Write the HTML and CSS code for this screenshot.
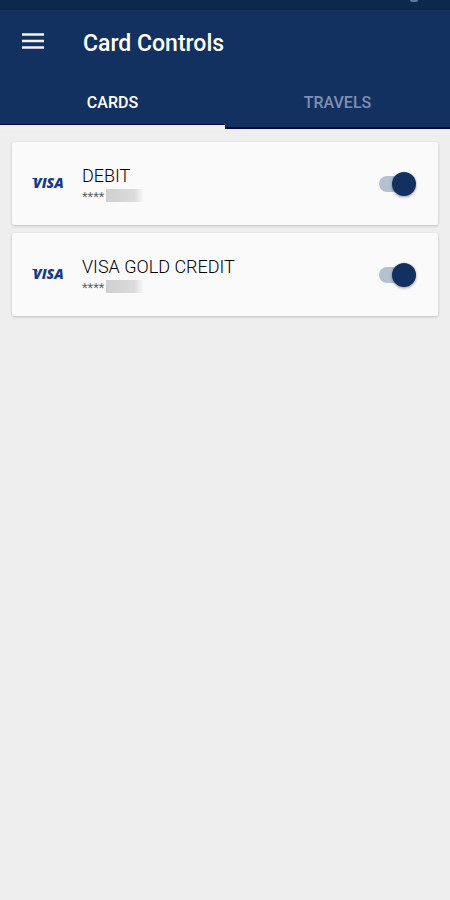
FILE: index.html
```html
<!DOCTYPE html>
<html lang="en">
<head>
<meta charset="utf-8">
<meta name="viewport" content="width=device-width, initial-scale=1">
<title>Card Controls</title>
<link rel="stylesheet" href="styles.css">
</head>
<body>
<header class="header">
  <div class="status"><span class="status-icon"></span></div>
  <div class="toolbar">
    <button class="menu" type="button" aria-label="Menu">
      <svg width="22" height="16" viewBox="0 0 22 16"><path d="M0 1.5h22M0 8h22M0 14.5h22" stroke="currentColor" stroke-width="2.6"/></svg>
    </button>
    <h1 class="title">Card Controls</h1>
  </div>
  <nav class="tabs">
    <button class="tab active" type="button">CARDS</button>
    <button class="tab" type="button">TRAVELS</button>
  </nav>
</header>
<main class="cards">
  <section class="card">
    <svg class="visa" width="38" height="24" viewBox="0 0 38 24"><path d="M0 7h4.500l1.500 3Q3 8 0 7.500z"/><text x="1" y="17">VISA</text></svg>
    <label class="info" for="debit">
      <span class="name">DEBIT</span>
      <span class="number">****<span class="mask"></span></span>
    </label>
    <input class="switch" id="debit" type="checkbox" role="switch" checked>
  </section>
  <section class="card">
    <svg class="visa" width="38" height="24" viewBox="0 0 38 24"><path d="M0 7h4.500l1.500 3Q3 8 0 7.500z"/><text x="1" y="17">VISA</text></svg>
    <label class="info" for="gold">
      <span class="name">VISA GOLD CREDIT</span>
      <span class="number">****<span class="mask"></span></span>
    </label>
    <input class="switch" id="gold" type="checkbox" role="switch" checked>
  </section>
</main>
</body>
</html>
```
FILE: styles.css
```css
* { box-sizing: border-box; }
body {
  margin: 0;
  background: #eee;
  font-family: Roboto, "Liberation Sans", sans-serif;
}
button {
  border: 0;
  padding: 0;
  background: none;
  font-family: inherit;
}
.header { background: #133160; color: #fff; }
.status {
  display: flex;
  justify-content: flex-end;
  height: 10px;
  padding-right: 32px;
  background: #0c284b;
}
.status-icon {
  width: 8px;
  height: 2px;
  border-radius: 0 0 2px 2px;
  background: #61789a;
}
.toolbar {
  display: flex;
  align-items: flex-start;
  gap: 39px;
  height: 66px;
  padding: 20px 22px 0;
}
.menu { display: flex; height: 22px; align-items: center; color: #f4f2ff; }
.title { margin: 0; font-size: 23px; line-height: 28px; font-weight: 500; }
.tabs { display: flex; height: 53px; }
.tab {
  flex: 1;
  border-top: 4px solid transparent;
  border-bottom: 4px solid transparent;
  font-size: 16px;
  font-weight: 500;
  color: #7e90ae;
  background: linear-gradient(#05044d, #05044d) bottom / 100% 2px no-repeat border-box;
}
.tab.active {
  color: #fff;
  border-bottom-color: #f0eff2;
  background: linear-gradient(#05044d, #05044d) bottom / 100% 1px no-repeat padding-box;
}
.cards { display: grid; gap: 8px; padding: 13px 12px; }
.card {
  display: flex;
  align-items: center;
  height: 83px;
  padding: 0 22px 0 20px;
  border-radius: 2px;
  background: #fafafa;
  box-shadow: 0 1px 3px rgba(0, 0, 0, 0.2);
}
.visa {
  margin: 0 12px 2px 0;
  fill: #17398a;
  font: italic 800 14px "Open Sans", sans-serif;
}
.info { display: grid; flex: 1; }
.name { font-size: 18px; line-height: 23px; font-weight: 300; color: #000; }
.number {
  display: flex;
  height: 17px;
  font-size: 13px;
  line-height: 20px;
  color: #666;
}
.mask {
  width: 38px;
  height: 13px;
  margin: 2px 0 0 2px;
  background: linear-gradient(90deg, #cfcfcf, #dcdcdc 75%, #fafafa);
}
.switch {
  appearance: none;
  position: relative;
  display: flex;
  justify-content: flex-end;
  width: 37px;
  height: 24px;
  margin: 0;
}
.switch::before {
  content: "";
  position: relative;
  z-index: 1;
  width: 24px;
  height: 24px;
  border-radius: 50%;
  background: #133160;
  box-shadow: 0 1px 3px rgba(0, 0, 0, 0.4);
}
.switch::after {
  content: "";
  position: absolute;
  inset: 4px 0;
  border-radius: 8px;
  background: #b5c1d0;
}
.switch:not(:checked) { justify-content: flex-start; }
```
